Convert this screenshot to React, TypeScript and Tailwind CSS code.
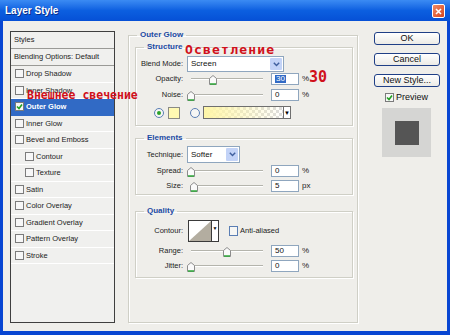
import React from 'react';

const UI = "font-['Liberation_Sans',Arial,sans-serif]";

const ListCheck = ({ checked = false }: { checked?: boolean }) => (
  <span className="flex h-[9px] w-[9px] shrink-0 items-center justify-center border border-[#7b7b7b] bg-[#f7f7f7]">
    {checked && (
      <svg width="7" height="7" viewBox="0 0 7 7">
        <path d="M1 3.5 L3 5.5 L6 1.5" stroke="#21a121" strokeWidth="1.6" fill="none" />
      </svg>
    )}
  </span>
);

const styleRows: { label: string; indent?: boolean; active?: boolean }[] = [
  { label: 'Drop Shadow' },
  { label: 'Inner Shadow' },
  { label: 'Outer Glow', active: true },
  { label: 'Inner Glow' },
  { label: 'Bevel and Emboss' },
  { label: 'Contour', indent: true },
  { label: 'Texture', indent: true },
  { label: 'Satin' },
  { label: 'Color Overlay' },
  { label: 'Gradient Overlay' },
  { label: 'Pattern Overlay' },
  { label: 'Stroke' },
];

const Thumb = () => (
  <svg width="8" height="10" viewBox="0 0 8 10">
    <path d="M0.5 3.5 L4 0.5 L7.5 3.5 L7.5 9.5 L0.5 9.5 Z" fill="#fafafa" stroke="#8c8c8c" strokeWidth="1" />
    <path d="M1 9 L7 9" stroke="#2fa83a" strokeWidth="1.5" />
  </svg>
);

// thumb offset is left position within an 80px slider
const Slider = ({ at }: { at: number }) => (
  <div className="relative h-[12px] w-[80px]">
    <div className="absolute left-[4px] right-[4px] top-[5px] h-[2px] border-t border-[#b4b4ac] bg-white" />
    <div className="absolute top-[2px]" style={{ left: at }}>
      <Thumb />
    </div>
  </div>
);

const NumField = ({ value, unit, selected }: { value: string; unit: string; selected?: boolean }) => (
  <>
    <div className="ml-[4px] flex h-[12px] w-[28px] items-center border border-[#8fa6be] bg-white pl-[3px] text-[8px] leading-none text-[#111]">
      {selected ? <span className="bg-[#316ac5] px-[1px] text-white">{value}</span> : value}
    </div>
    <span className="ml-[3px] text-[8px] text-[#222]">{unit}</span>
  </>
);

const SliderRow = ({ label, at, value, unit, selected, className = '' }: {
  label: string; at: number; value: string; unit: string; selected?: boolean; className?: string;
}) => (
  <div className={`flex h-[12px] items-center ${className}`}>
    <span className="w-[47px] text-right text-[7.5px] leading-none text-[#222]">{label}</span>
    <span className="ml-[4px]" />
    <Slider at={at} />
    <NumField value={value} unit={unit} selected={selected} />
  </div>
);

const Chevron = () => (
  <svg width="7" height="5" viewBox="0 0 7 5">
    <path d="M0.8 0.8 L3.5 3.6 L6.2 0.8" stroke="#3f5f9e" strokeWidth="1.4" fill="none" />
  </svg>
);

const Select = ({ value, width, height }: { value: string; width: string; height: string }) => (
  <div className={`flex items-stretch border border-[#8fa6be] bg-white ${width} ${height}`}>
    <span className="flex flex-1 items-center pl-[3px] text-[8px] leading-none text-[#111]">{value}</span>
    <span className="m-[1px] flex w-[12px] items-center justify-center rounded-[1px] bg-[#c3d3f7]">
      <Chevron />
    </span>
  </div>
);

const Radio = ({ on = false }: { on?: boolean }) => (
  <span className="flex h-[10px] w-[10px] items-center justify-center rounded-full border border-[#5a7eb4] bg-[#f6f6f4]">
    {on && <span className="h-[4px] w-[4px] rounded-full bg-[#2aa22a]" />}
  </span>
);

const Group = ({ title, className, children }: { title: string; className: string; children: React.ReactNode }) => (
  <fieldset className={`border border-[#cfcfc6] shadow-[inset_1px_1px_0_#fff,1px_1px_0_#fff] ${className}`}>
    <legend className="ml-[8px] px-[3px] text-[8px] font-bold leading-[8px] text-[#1b4aa3]">{title}</legend>
    {children}
  </fieldset>
);

const Button = ({ children, className = '' }: { children: React.ReactNode; className?: string }) => (
  <button className={`flex h-[13px] w-[66px] items-center justify-center rounded-[3px] border border-[#1f3f86] bg-gradient-to-b from-white to-[#ecebe6] text-[9px] leading-none text-[#111] ${className}`}>
    {children}
  </button>
);

export default function App() {
  return (
    <div className={`relative flex h-[335px] w-[450px] flex-col overflow-hidden bg-[#0846d2] ${UI}`}>
      {/* title bar */}
      <div className="flex h-[21px] items-center justify-between bg-gradient-to-b from-[#3b8bf3] via-[#0c5fe0] to-[#0650d6] pl-[5px] pr-[5px]">
        <span className="text-[10px] font-bold text-white [text-shadow:1px_1px_0_#0a2f8a]">Layer Style</span>
        <span className="mt-[1px] flex h-[14px] w-[13px] items-center justify-center rounded-[2px] border border-white bg-gradient-to-br from-[#f08a64] to-[#d4421a]">
          <svg width="7" height="7" viewBox="0 0 7 7">
            <path d="M1 1 L6 6 M6 1 L1 6" stroke="white" strokeWidth="1.6" />
          </svg>
        </span>
      </div>

      {/* body */}
      <div className="mx-[3px] mb-[4px] flex flex-1 items-start bg-[#efeeea] pl-[7px] pt-[10px]">
        {/* styles list */}
        <div className="flex h-[292px] w-[105px] flex-col border border-[#3f3f3f] bg-[#f0f0ee] text-[7.5px] leading-none text-[#222]">
          <div className="flex h-[17px] items-center border-b border-[#9a9a96] pl-[3px]">Styles</div>
          <div className="flex h-[17px] items-center border-b border-[#9a9a96] pl-[3px]">Blending Options: Default</div>
          {styleRows.map((r) => (
            <div
              key={r.label}
              className={`flex h-[16.5px] items-center gap-[2px] border-b ${r.active ? 'border-[#316ac5] bg-[#316ac5] font-bold text-white' : 'border-white'} ${r.indent ? 'pl-[14px]' : 'pl-[4px]'}`}
            >
              <ListCheck checked={r.active} />
              <span>{r.label}</span>
            </div>
          ))}
        </div>

        {/* settings */}
        <Group title="Outer Glow" className="ml-[13px] h-[292px] w-[230px]">
          <Group title="Structure" className="ml-[6px] mt-[4px] h-[83px] w-[218px]">
            <div className="mt-[5px] flex h-[16px] items-center">
              <span className="w-[47px] text-right text-[7.5px] leading-none text-[#222]">Blend Mode:</span>
              <span className="ml-[4px]" />
              <Select value="Screen" width="w-[97px]" height="h-[16px]" />
            </div>
            <SliderRow label="Opacity:" at={22} value="30" unit="%" selected className="mt-[1px]" />
            <SliderRow label="Noise:" at={0} value="0" unit="%" className="mt-[4px]" />
            <div className="mt-[5px] flex h-[13px] items-center">
              <span className="ml-[18px]" />
              <Radio on />
              <span className="ml-[4px] h-[12px] w-[12px] border border-[#8a8a84] bg-[#fff9b2]" />
              <span className="ml-[10px]" />
              <Radio />
              <div className="ml-[3px] flex h-[13px] w-[88px] border border-[#6f6f6f]">
                <div className="flex-1 bg-[linear-gradient(to_right,#fff6a8,rgba(255,248,180,0)),repeating-conic-gradient(#dcdcdc_0_25%,#ffffff_0_50%)] [background-size:100%_100%,6px_6px]" />
                <div className="flex w-[7px] items-center justify-center border-l border-[#6f6f6f] bg-white text-[6px] leading-none text-black">▼</div>
              </div>
            </div>
          </Group>

          <Group title="Elements" className="ml-[6px] mt-[8px] h-[61px] w-[218px]">
            <div className="mt-[4px] flex h-[17px] items-center">
              <span className="w-[47px] text-right text-[7.5px] leading-none text-[#222]">Technique:</span>
              <span className="ml-[4px]" />
              <Select value="Softer" width="w-[53px]" height="h-[17px]" />
            </div>
            <SliderRow label="Spread:" at={0} value="0" unit="%" className="mt-[2px]" />
            <SliderRow label="Size:" at={3} value="5" unit="px" className="mt-[3px]" />
          </Group>

          <Group title="Quality" className="ml-[6px] mt-[12px] h-[71px] w-[218px]">
            <div className="mt-[5px] flex h-[22px] items-center">
              <span className="w-[47px] text-right text-[7.5px] leading-none text-[#222]">Contour:</span>
              <span className="ml-[5px]" />
              <div className="flex h-[22px] w-[31px] border border-[#3a3a3a] bg-white">
                <svg width="22" height="20" viewBox="0 0 22 20">
                  <path d="M0 20 L22 0 L22 20 Z" fill="#b3ada0" />
                </svg>
                <div className="flex flex-1 items-start justify-center border-l border-[#3a3a3a] pt-[5px] text-[5px] leading-none text-black">▼</div>
              </div>
              <span className="ml-[10px] h-[10px] w-[9px] border border-[#5a7eb4] bg-[#f6f6f4]" />
              <span className="ml-[2px] text-[7.5px] leading-none text-[#222]">Anti-aliased</span>
            </div>
            <SliderRow label="Range:" at={36} value="50" unit="%" className="mt-[3px]" />
            <SliderRow label="Jitter:" at={0} value="0" unit="%" className="mt-[3px]" />
          </Group>
        </Group>

        {/* buttons */}
        <div className="ml-[16px] mt-[1px] flex flex-col">
          <Button>OK</Button>
          <Button className="mt-[8px]">Cancel</Button>
          <Button className="mt-[8px]">New Style...</Button>
          <div className="ml-[11px] mt-[6px] flex items-center gap-[2px]">
            <ListCheck checked />
            <span className="text-[9px] leading-none text-[#111]">Preview</span>
          </div>
          <div className="ml-[8px] mt-[6px] flex h-[49px] w-[49px] items-center justify-center bg-[#d5d5d3]">
            <div className="h-[24px] w-[24px] bg-[#555555]" />
          </div>
        </div>
      </div>

      {/* red annotations over the dialog */}
      <span className="absolute left-[27px] top-[90px] font-['DejaVu_Sans_Mono',monospace] text-[11.5px] font-bold leading-none text-[#d0101a]">Внешнее свечение</span>
      <span className="absolute left-[185px] top-[43px] font-['DejaVu_Sans_Mono',monospace] text-[13px] font-bold leading-none tracking-[1.2px] text-[#d0101a]">Осветление</span>
      <span className="absolute left-[309px] top-[70px] font-['DejaVu_Sans_Mono',monospace] text-[15px] font-bold leading-none text-[#d0101a]">30</span>
    </div>
  );
}
